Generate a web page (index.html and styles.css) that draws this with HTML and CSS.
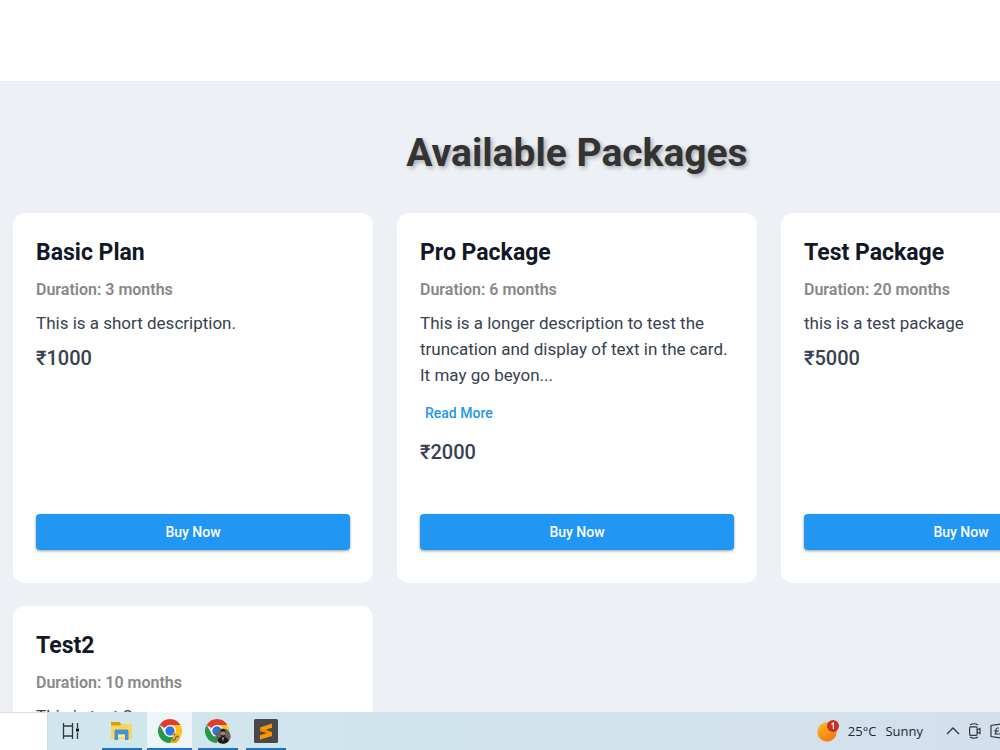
FILE: index.html
```html
<!DOCTYPE html>
<html lang="en">
<head>
<meta charset="utf-8">
<title>Available Packages</title>
<link rel="stylesheet" href="styles.css">
</head>
<body>
<main class="page">
  <section class="packages">
    <h1 class="packages-title">Available Packages</h1>
    <div class="package-grid">
      <article class="card">
        <h2 class="card-title">Basic Plan</h2>
        <p class="card-duration">Duration: 3 months</p>
        <p class="card-text">This is a short description.</p>
        <p class="card-price">₹1000</p>
        <button class="buy" type="button">Buy Now</button>
      </article>
      <article class="card">
        <h2 class="card-title">Pro Package</h2>
        <p class="card-duration">Duration: 6 months</p>
        <p class="card-text">This is a longer description to test the truncation and display of text in the card. It may go beyon...</p>
        <button class="read-more" type="button">Read More</button>
        <p class="card-price">₹2000</p>
        <button class="buy" type="button">Buy Now</button>
      </article>
      <article class="card">
        <h2 class="card-title">Test Package</h2>
        <p class="card-duration">Duration: 20 months</p>
        <p class="card-text">this is a test package</p>
        <p class="card-price">₹5000</p>
        <button class="buy" type="button">Buy Now</button>
      </article>
      <article class="card">
        <h2 class="card-title">Test2</h2>
        <p class="card-duration">Duration: 10 months</p>
        <p class="card-text">This is test 2</p>
      </article>
    </div>
  </section>
</main>
<footer class="taskbar">
  <div class="taskbar-search"></div>
  <nav class="apps">
    <button class="app" type="button" aria-label="Task view">
      <svg width="24" height="24" viewBox="0 0 24 24" fill="none" stroke="#30383b" stroke-width="1.3"><path d="M4.5 4v3h9V4M4.5 20v-3h9v3M4.5 7v10M13.500 7v10M18.500 4v5M18.500 13.500V20"/><path d="M17 9.500h3v3h-3z" fill="#111" stroke="none"/></svg>
    </button>
    <button class="app running" type="button" aria-label="File Explorer">
      <svg width="24" height="24" viewBox="0 0 24 24"><path d="M1 3h8.500l1.500 2v3H1z" fill="#d99a0b"/><path d="M1 6.500h9L11.500 5H21q1 0 1 1v14H1z" fill="#ffd45e"/><path d="M4.500 21v-9q0-1.500 1.500-1.500h11q1.500 0 1.500 1.500v9h-3.500v-5.500H8V21z" fill="#3a94d8"/><path d="M8 15.500h7V18H8z" fill="#ffe391"/></svg>
    </button>
    <button class="app running active" type="button" aria-label="Chrome">
      <svg width="26" height="26" viewBox="0 0 26 26"><path d="M2.600 7A12 12 0 0 1 23.400 7H13L7.800 10z" fill="#e33b2e"/><path d="M13 7h10.400A12 12 0 0 1 13 25l5.200-9z" fill="#fcc31e"/><path d="M2.600 7l5.200 9 5.200 3h3.500L13 25A12 12 0 0 1 2.600 7z" fill="#279847"/><circle cx="13" cy="13" r="6" fill="#fff"/><circle cx="13" cy="13" r="4.700" fill="#2e75e8"/><path d="M15 17l2-3 2 1 1 2 3 2-1 3-3 3h-4l-1-2 3-2z" fill="#e5a82a"/><path d="M15 22l3 0 1-3 3-1M17 16l1 1" fill="none" stroke="#765d23"/></svg>
    </button>
    <button class="app running" type="button" aria-label="Chrome, second profile">
      <svg width="28" height="26" viewBox="0 0 28 26"><path d="M2.600 7A12 12 0 0 1 23.400 7H13L7.800 10z" fill="#e33b2e"/><path d="M13 7h10.400A12 12 0 0 1 13 25l5.200-9z" fill="#fcc31e"/><path d="M2.600 7l5.200 9 5.200 3v6A12 12 0 0 1 2.600 7z" fill="#279847"/><circle cx="13" cy="13" r="6" fill="#fff"/><circle cx="13" cy="13" r="4.700" fill="#2e75e8"/><circle cx="19" cy="18.200" r="7.600" fill="#68645f"/><path d="M13.500 23q.5-3.500 4-4h3q3.500.5 4 4-2 2.800-5.500 2.800T13.500 23z" fill="#18191d"/><ellipse cx="19" cy="15.800" rx="2.300" ry="3.200" fill="#a67d69"/><path d="M16.500 14.500q-.2-3.500 2.500-3.500t2.500 3.500l-1-1h-3zM16.700 16.800l2.300.8 2.300-.8-.8 2.600h-3z" fill="#191717"/><path d="M18.200 19.600h1.600l-.8 4z" fill="#ddd"/></svg>
    </button>
    <button class="app running" type="button" aria-label="Sublime Text">
      <svg width="24" height="24" viewBox="0 0 24 24"><rect width="24" height="24" rx="1.500" fill="#494949"/><path d="M6 8.500 18 4.500v4.200l-7 2.300 7 2.200v3.700L6 20.500v-4.300l7-2.200-7-2z" fill="#ff9800"/><path d="M6 8.500l12 4.700-1 1L6 12z" fill="#f08e00"/></svg>
    </button>
  </nav>
  <div class="tray">
    <button class="weather" type="button">
      <svg width="22" height="22" viewBox="0 0 22 22"><defs><linearGradient id="sun" x2=".6" y2="1"><stop stop-color="#ffbd25"/><stop offset="1" stop-color="#f57911"/></linearGradient></defs><circle cx="10" cy="12" r="9.700" fill="url(#sun)"/><circle cx="16" cy="6" r="6" fill="#c93127"/><path d="M14.500 4.500 16.300 3v6" fill="none" stroke="#fff" stroke-width="1.100"/></svg>
      <span>25°C</span><span>Sunny</span>
    </button>
    <div class="tray-icons">
      <svg width="14" height="14" viewBox="0 0 14 14" fill="none" stroke="#30363b" stroke-width="1.300"><path d="M1 10 7 4l6 6"/></svg>
      <svg width="14" height="16" viewBox="0 0 14 16" fill="none" stroke="#30363b" stroke-width="1.200"><rect x="1.600" y="3.800" width="7.500" height="8.500" rx="1"/><path d="M9 7l3-1.500v5L9 9M2 2q4-2.500 8 0M2 14q4 2.500 8 0"/></svg>
      <svg width="10" height="16" viewBox="5 0 10 16" fill="none" stroke="#30363b" stroke-width="1.200"><path d="M16 1 6 2.500v11L16 15M14 5h-1.500Q11 5 11 7v2q0 2-1.500 2H15M9 8h5"/></svg>
    </div>
  </div>
</footer>
</body>
</html>
```

FILE: styles.css
```css
* { box-sizing: border-box; }

body {
  margin: 0;
  height: 100vh;
  display: flex;
  flex-direction: column;
  overflow: hidden;
  background: #fff;
  font-family: Roboto, "Liberation Sans", sans-serif;
}

h1, h2, p { margin: 0; }

button {
  border: 0;
  padding: 0;
  background: none;
  font: inherit;
  color: inherit;
}

.page {
  flex: 1;
  min-height: 0;
  overflow: hidden;
  padding-top: 81px;
}

.packages {
  width: max-content;
  min-width: 100%;
  padding: 48px 13px;
  background: #edf0f5;
}

.packages-title {
  margin-bottom: 36px;
  font-size: 39px;
  line-height: 48px;
  font-weight: 700;
  text-align: center;
  color: #333;
  text-shadow: 2px 2px 4px rgba(0, 0, 0, 0.3);
}

.package-grid {
  display: grid;
  grid-template-columns: repeat(3, minmax(360px, 1fr));
  gap: 23px 24px;
}

.card {
  display: flex;
  flex-direction: column;
  min-height: 370px;
  padding: 24px 23px 33px;
  border-radius: 12px;
  background: #fff;
  contain: inline-size;
}

.card-title {
  margin-bottom: 10px;
  font-size: 23px;
  line-height: 32px;
  font-weight: 700;
  color: #111827;
}

.card-duration {
  margin-bottom: 9px;
  font-size: 16px;
  line-height: 22px;
  font-weight: 600;
  color: #888;
}

.card-text {
  margin-bottom: 8px;
  font-size: 17px;
  line-height: 26px;
  color: #374151;
}

.read-more {
  align-self: flex-start;
  height: 34px;
  margin-bottom: 8px;
  padding: 0 5px;
  font-size: 14px;
  font-weight: 500;
  color: #2196f3;
}

.card-price {
  font-size: 20px;
  line-height: 28px;
  font-weight: 500;
  color: #374151;
}

.buy {
  height: 36px;
  margin-top: auto;
  border-radius: 4px;
  background: #2196f3;
  box-shadow: 0 1px 3px rgba(0, 0, 0, 0.4);
  font-size: 14px;
  font-weight: 500;
  color: #fff;
}

.taskbar {
  flex: none;
  display: flex;
  height: 38px;
  background: linear-gradient(90deg, #cfe7ed, #d0e3ec 50%, #d4dfed);
}

.taskbar-search {
  width: 48px;
  border-top: 1px solid #ddd;
  border-right: 1px solid #c5dce2;
  background: #fff;
}

.apps {
  display: flex;
  gap: 8px;
}

.app {
  display: grid;
  place-items: center;
  width: 40px;
  padding-top: 2px;
  border-bottom: 2px solid transparent;
}

.app:first-child { width: 46px; }

.running { border-bottom-color: #1676c9; }

.active {
  width: 45px;
  margin: 0 -2px 0 -3px;
  background: #edf5f9;
}

.tray {
  display: flex;
  align-items: center;
  gap: 23px;
  margin-left: auto;
  color: #25292d;
}

.weather {
  display: flex;
  align-items: center;
  gap: 9px;
  font-family: "Open Sans", "Noto Sans", sans-serif;
  font-size: 13px;
}

.tray-icons {
  display: flex;
  align-items: center;
  gap: 8px;
}
```
